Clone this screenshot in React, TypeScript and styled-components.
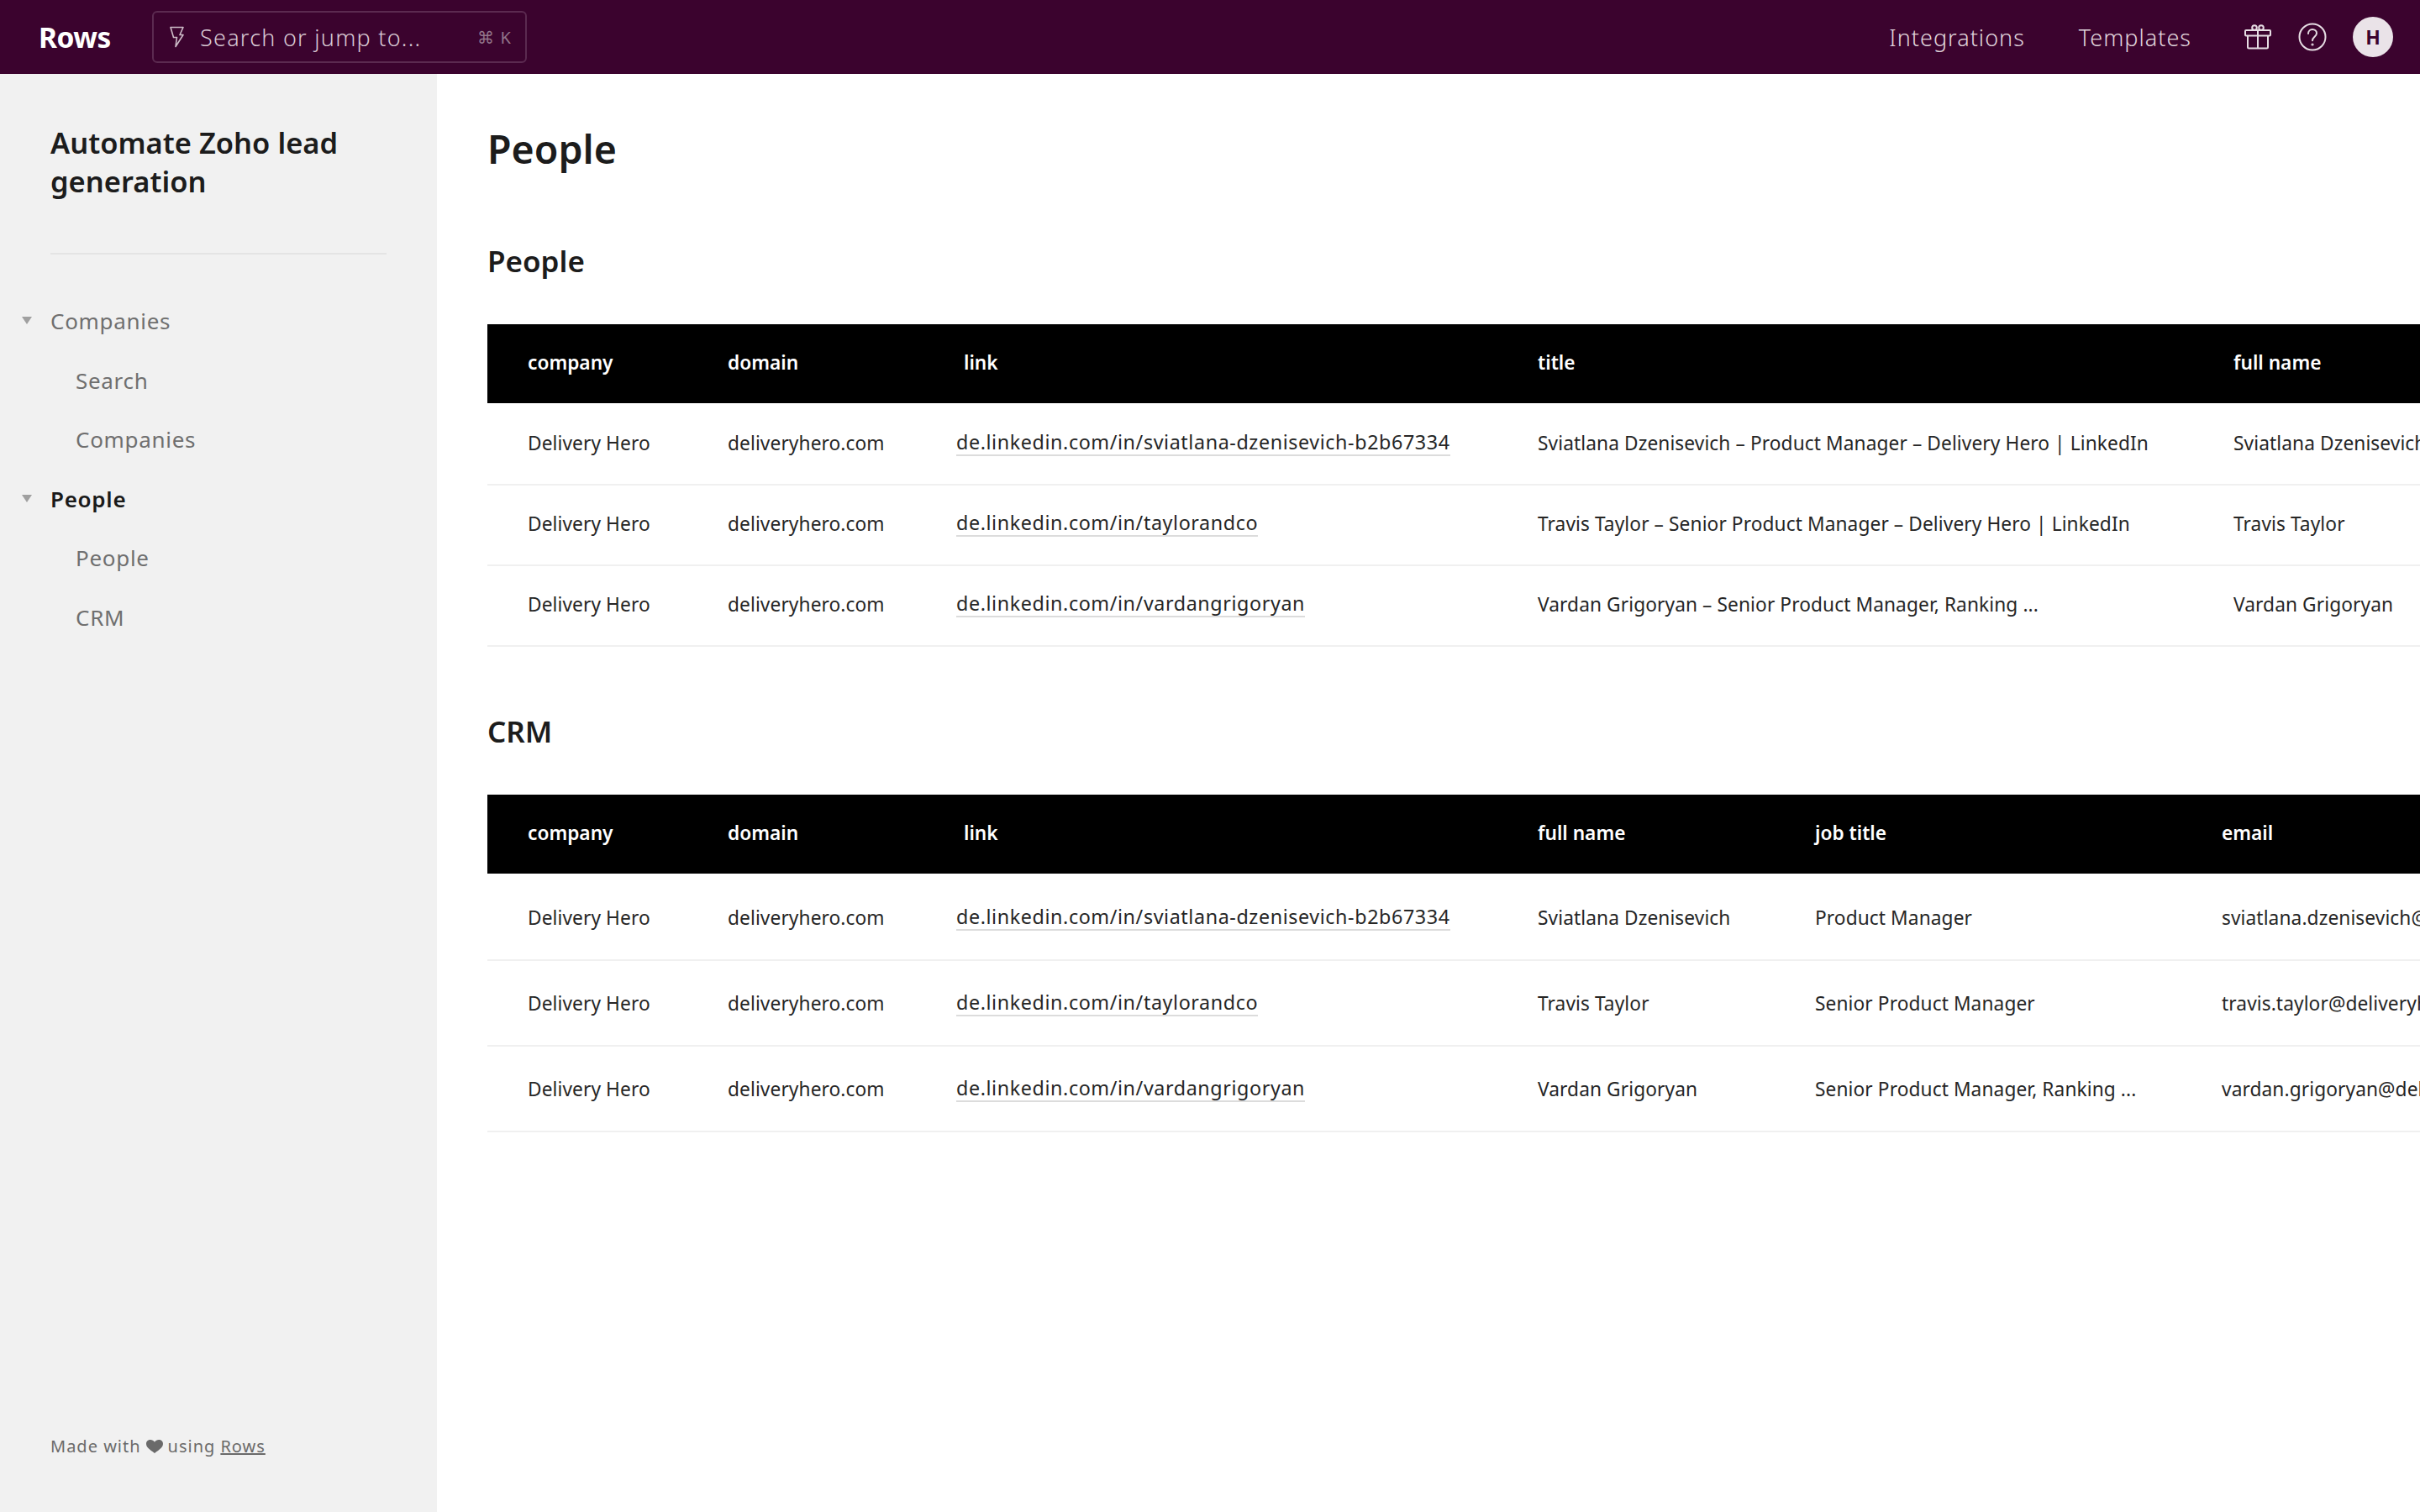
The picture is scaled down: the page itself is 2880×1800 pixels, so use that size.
import React from 'react';
import styled, { createGlobalStyle } from 'styled-components';

const FONT = `"Noto Sans", "Open Sans", "Liberation Sans", sans-serif`;

const Global = createGlobalStyle`
  html, body { margin: 0; padding: 0; height: 100%; overflow: hidden; background: #fff; }
  body { font-family: ${FONT}; color: #1c1c1c; }
  * { box-sizing: border-box; }
`;

const Page = styled.div`
  width: 2880px; height: 1800px; display: flex; flex-direction: column; overflow: hidden;
`;
const TopBar = styled.header`
  height: 88px; flex: none; background: #3b032e; display: flex; align-items: center;
  padding: 0 32px 0 46px;
`;
const Logo = styled.div`
  width: 135px; font-size: 33.5px; font-weight: 700; color: #fff; letter-spacing: -0.5px;
`;
const SearchBox = styled.div`
  width: 446px; height: 62px; border: 2px solid #5b2a50; border-radius: 6px;
  display: flex; align-items: center; padding: 0 16px 0 18px; color: #d8c8d3;
`;
const SearchText = styled.span`
  flex: 1; margin-left: 17px; font-size: 27px; letter-spacing: 1.25px; font-weight: 300;
`;
const Shortcut = styled.span`
  font-size: 20px; color: #92758a; letter-spacing: 1px;
`;
const Spacer = styled.div`flex: 1;`;
const NavLink = styled.a<{ $gap: number }>`
  font-size: 27px; font-weight: 300; color: #e0d5dc; letter-spacing: 1px; margin-right: ${p => p.$gap}px;
`;
const IconSlot = styled.span<{ $gap: number }>`
  display: flex; margin-right: ${p => p.$gap}px; color: #e6dde3;
`;
const Avatar = styled.div`
  width: 48px; height: 48px; border-radius: 50%; background: #eae3e8; color: #3b032e;
  display: flex; align-items: center; justify-content: center; font-size: 23px; font-weight: 700;
`;
const Body = styled.div`flex: 1; display: flex; min-height: 0;`;
const Sidebar = styled.aside`
  width: 520px; flex: none; background: #f1f1f1; display: flex; flex-direction: column;
  padding: 59px 60px 0;
`;
const SideTitle = styled.h2`
  margin: 0; font-size: 34.5px; line-height: 46px; font-weight: 600; color: #1c1c1c;
`;
const Divider = styled.hr`
  margin: 62px 0 0; border: 0; height: 2px; background: #e4e4e4;
`;
const SideNav = styled.nav`
  margin-top: 44px; display: flex; flex-direction: column; flex: 1;
`;
const NavItem = styled.div<{ $sub?: boolean; $active?: boolean }>`
  position: relative; height: 70.5px; display: flex; align-items: center;
  padding-left: ${p => (p.$sub ? 30 : 0)}px; font-size: 26px; letter-spacing: 0.7px;
  font-weight: ${p => (p.$active ? 600 : 400)};
  color: ${p => (p.$active ? '#1a1a1a' : '#6f6f6f')};
`;
const Caret = styled.span`
  position: absolute; left: -34px; top: 50%; margin-top: -5px; width: 0; height: 0;
  border-left: 6px solid transparent; border-right: 6px solid transparent; border-top: 9px solid #a0a0a0;
`;
const Footer = styled.div`
  font-size: 20px; color: #6a6a6a; letter-spacing: 1px; display: flex; align-items: center; gap: 6px;
  margin-bottom: 65px;
`;
const FooterLink = styled.a`text-decoration: underline;`;
const Main = styled.main`
  flex: 1; min-width: 0; overflow: hidden; padding: 58px 0 0 60px;
`;
const PageTitle = styled.h1`
  margin: 0; font-size: 46.5px; line-height: 62px; font-weight: 600; color: #1c1c1c;
`;
const SectionTitle = styled.h2<{ $top: number }>`
  margin: ${p => p.$top}px 0 0; font-size: 35px; line-height: 46px; font-weight: 600; color: #1c1c1c;
`;
const Table = styled.div`
  margin-top: 52px; width: 3000px;
`;
const HeadRow = styled.div<{ $cols: string }>`
  display: grid; grid-template-columns: ${p => p.$cols}; height: 94px; align-items: center;
  padding-bottom: 3px; margin-bottom: 2px;
  background: #000; color: #fff; font-size: 22.7px; font-weight: 600;
`;
const Row = styled.div<{ $cols: string; $h: number; $lift: number }>`
  display: grid; grid-template-columns: ${p => p.$cols}; height: ${p => p.$h}px; align-items: center;
  padding-bottom: ${p => p.$lift}px;
  border-bottom: 2px solid #f0f0f0; font-size: 22.7px; letter-spacing: 0.1px; color: #262626;
`;
const Cell = styled.div`
  padding-left: 48px; white-space: nowrap; min-width: 0;
`;
const LinkText = styled.a`
  display: inline-block; margin-left: -9px; font-size: 23.3px; letter-spacing: 0.6px; line-height: 30px;
  border-bottom: 2px solid #dcdcdc;
`;

const cols1 = '238px 281px 683px 828px 600px';
const cols2 = '238px 281px 683px 330px 484px 600px';
const links = ['sviatlana-dzenisevich-b2b67334', 'taylorandco', 'vardangrigoryan'];
const co = 'Delivery Hero';
const dom = 'deliveryhero.com';
const people = [
  ['Sviatlana Dzenisevich – Product Manager – Delivery Hero | LinkedIn', 'Sviatlana Dzenisevich'],
  ['Travis Taylor – Senior Product Manager – Delivery Hero | LinkedIn', 'Travis Taylor'],
  ['Vardan Grigoryan – Senior Product Manager, Ranking ...', 'Vardan Grigoryan'],
];
const crm = [
  ['Sviatlana Dzenisevich', 'Product Manager', 'sviatlana.dzenisevich@deliveryhero.com'],
  ['Travis Taylor', 'Senior Product Manager', 'travis.taylor@deliveryhero.com'],
  ['Vardan Grigoryan', 'Senior Product Manager, Ranking ...', 'vardan.grigoryan@deliveryhero.com'],
];

const Bolt = () => (
  <svg width="20" height="26" viewBox="0 0 20 26" fill="none" stroke="#cdbcc8" strokeWidth="1.6" strokeLinejoin="round">
    <path d="M2 1.500h15l-4 9h4L8 24.500l1.500-11H5.500z" />
  </svg>
);
const GiftIcon = () => (
  <svg width="34" height="30" viewBox="0 0 34 30" fill="none" stroke="currentColor" strokeWidth="2" strokeLinejoin="round">
    <rect x="2" y="7" width="30" height="6.500" rx="1" />
    <path d="M5 13.500V27a1.500 1.500 0 0 0 1.500 1.500h21A1.500 1.500 0 0 0 29 27V13.500M17 7v21.500" />
    <circle cx="13" cy="4" r="2.800" />
    <circle cx="21" cy="4" r="2.800" />
  </svg>
);
const HelpIcon = () => (
  <svg width="34" height="36" viewBox="0 0 34 36" fill="none" stroke="currentColor" strokeWidth="2" strokeLinecap="round">
    <circle cx="17" cy="18" r="15.500" />
    <path d="M12 14c0-3 2.300-5 5-5s5 2 5 4.600c0 4-5 4.400-5 8.600" />
    <circle cx="17" cy="27" r="0.600" />
  </svg>
);
const Heart = () => (
  <svg width="20" height="16" viewBox="0 0 20 16" fill="#6a6a6a">
    <path d="M10 16C4 11.500 0 9 0 4.800 0 2 2.200 0 5 0c2 0 3.800 1 5 2.800C11.200 1 13 0 15 0c2.800 0 5 2 5 4.800C20 9 16 11.500 10 16z" />
  </svg>
);

export default function App() {
  return (
    <Page>
      <Global />
      <TopBar>
        <Logo>Rows</Logo>
        <SearchBox>
          <Bolt />
          <SearchText>Search or jump to...</SearchText>
          <Shortcut>⌘ K</Shortcut>
        </SearchBox>
        <Spacer />
        <NavLink $gap={64}>Integrations</NavLink>
        <NavLink $gap={62}>Templates</NavLink>
        <IconSlot $gap={31}><GiftIcon /></IconSlot>
        <IconSlot $gap={31}><HelpIcon /></IconSlot>
        <Avatar>H</Avatar>
      </TopBar>
      <Body>
        <Sidebar>
          <SideTitle>Automate Zoho lead generation</SideTitle>
          <Divider />
          <SideNav>
            <NavItem><Caret />Companies</NavItem>
            <NavItem $sub>Search</NavItem>
            <NavItem $sub>Companies</NavItem>
            <NavItem $active><Caret />People</NavItem>
            <NavItem $sub>People</NavItem>
            <NavItem $sub>CRM</NavItem>
            <Spacer />
            <Footer>Made with <Heart /> using <FooterLink>Rows</FooterLink></Footer>
          </SideNav>
        </Sidebar>
        <Main>
          <PageTitle>People</PageTitle>
          <SectionTitle $top={80}>People</SectionTitle>
          <Table>
            <HeadRow $cols={cols1}>
              <Cell>company</Cell><Cell>domain</Cell><Cell>link</Cell><Cell>title</Cell><Cell>full name</Cell>
            </HeadRow>
            {people.map((p, i) => (
              <Row key={i} $cols={cols1} $h={96} $lift={4}>
                <Cell>{co}</Cell>
                <Cell>{dom}</Cell>
                <Cell><LinkText>de.linkedin.com/in/{links[i]}</LinkText></Cell>
                <Cell>{p[0]}</Cell>
                <Cell>{p[1]}</Cell>
              </Row>
            ))}
          </Table>
          <SectionTitle $top={78}>CRM</SectionTitle>
          <Table>
            <HeadRow $cols={cols2}>
              <Cell>company</Cell><Cell>domain</Cell><Cell>link</Cell><Cell>full name</Cell><Cell>job title</Cell><Cell>email</Cell>
            </HeadRow>
            {crm.map((p, i) => (
              <Row key={i} $cols={cols2} $h={102} $lift={0}>
                <Cell>{co}</Cell>
                <Cell>{dom}</Cell>
                <Cell><LinkText>de.linkedin.com/in/{links[i]}</LinkText></Cell>
                <Cell>{p[0]}</Cell>
                <Cell>{p[1]}</Cell>
                <Cell>{p[2]}</Cell>
              </Row>
            ))}
          </Table>
        </Main>
      </Body>
    </Page>
  );
}
